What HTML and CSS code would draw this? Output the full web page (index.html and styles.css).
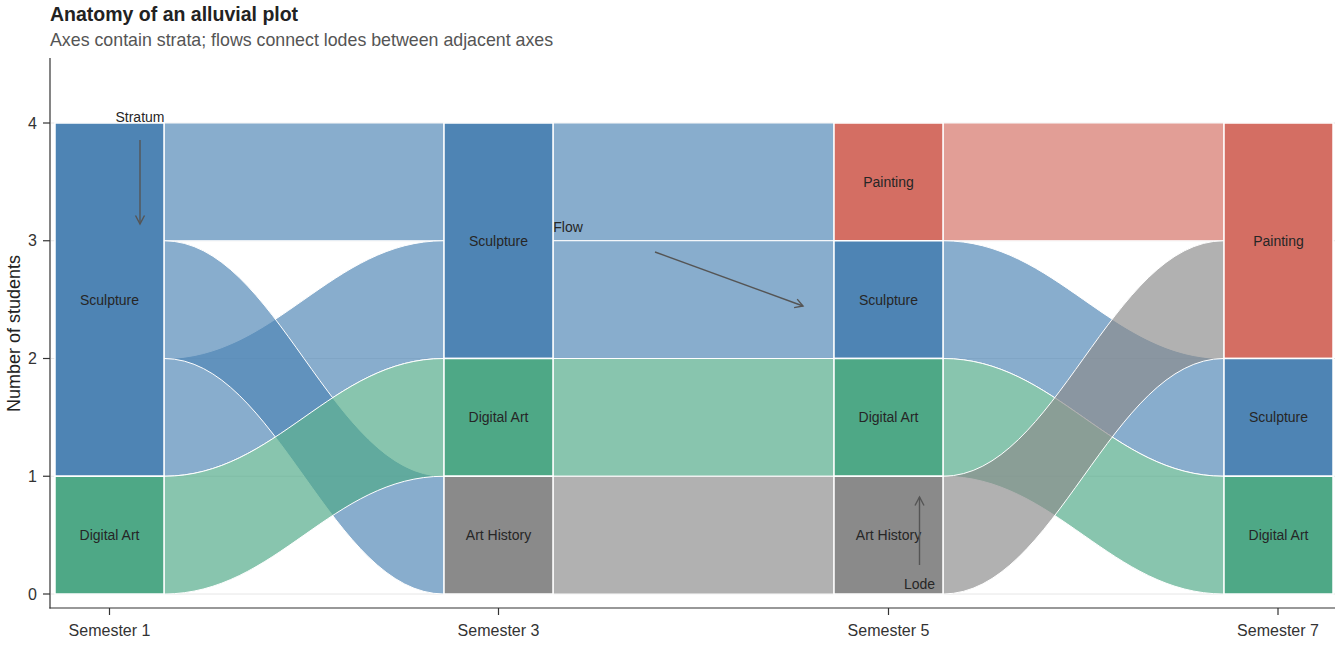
FILE: index.html
```html
<!DOCTYPE html>
<html lang="en">
<head>
<meta charset="utf-8">
<title>Anatomy of an alluvial plot</title>
<link rel="stylesheet" href="styles.css">
</head>
<body>
<div class="figure">
  <header class="head">
    <h1 class="title">Anatomy of an alluvial plot</h1>
    <p class="subtitle">Axes contain strata; flows connect lodes between adjacent axes</p>
  </header>
  <svg class="chart" width="1344" height="598" viewBox="0 52 1344 598" xmlns="http://www.w3.org/2000/svg">
    <!-- gridlines -->
    <g class="grid">
      <line x1="51" y1="594" x2="1335" y2="594"/>
      <line x1="51" y1="476.25" x2="1335" y2="476.25"/>
      <line x1="51" y1="358.5" x2="1335" y2="358.5"/>
      <line x1="51" y1="240.75" x2="1335" y2="240.75"/>
      <line x1="51" y1="123" x2="1335" y2="123"/>
    </g>

    <!-- flows: Semester 1 -> Semester 3 -->
    <g class="flows">
      <rect class="f-sculpture" x="164" y="123" width="280" height="117.75"/>
      <path class="f-sculpture" d="M164 358.5 C276 358.5 332 240.75 444 240.75 L444 358.5 C332 358.5 276 476.25 164 476.25 Z"/>
      <path class="f-sculpture" d="M164 240.75 C276 240.75 332 476.25 444 476.25 L444 594 C332 594 276 358.5 164 358.5 Z"/>
      <path class="f-digital" d="M164 476.25 C276 476.25 332 358.5 444 358.5 L444 476.25 C332 476.25 276 594 164 594 Z"/>

      <!-- Semester 3 -> Semester 5 -->
      <rect class="f-sculpture" x="553" y="123" width="281" height="117.75"/>
      <rect class="f-sculpture" x="553" y="240.75" width="281" height="117.75"/>
      <rect class="f-digital" x="553" y="358.5" width="281" height="117.75"/>
      <rect class="f-history" x="553" y="476.25" width="281" height="117.75"/>

      <!-- Semester 5 -> Semester 7 -->
      <rect class="f-painting" x="943" y="123" width="281" height="117.75"/>
      <path class="f-sculpture" d="M943 240.75 C1055.4 240.75 1111.6 358.5 1224 358.5 L1224 476.25 C1111.6 476.25 1055.4 358.5 943 358.5 Z"/>
      <path class="f-digital" d="M943 358.5 C1055.4 358.5 1111.6 476.25 1224 476.25 L1224 594 C1111.6 594 1055.4 476.25 943 476.25 Z"/>
      <path class="f-history" d="M943 476.25 C1055.4 476.25 1111.6 240.75 1224 240.75 L1224 358.5 C1111.6 358.5 1055.4 594 943 594 Z"/>
    </g>

    <!-- strata -->
    <g class="strata">
      <rect class="s-sculpture" x="55" y="123" width="109" height="353.25"/>
      <rect class="s-digital" x="55" y="476.25" width="109" height="117.75"/>

      <rect class="s-sculpture" x="444" y="123" width="109" height="235.5"/>
      <rect class="s-digital" x="444" y="358.5" width="109" height="117.75"/>
      <rect class="s-history" x="444" y="476.25" width="109" height="117.75"/>

      <rect class="s-painting" x="834" y="123" width="109" height="117.75"/>
      <rect class="s-sculpture" x="834" y="240.75" width="109" height="117.75"/>
      <rect class="s-digital" x="834" y="358.5" width="109" height="117.75"/>
      <rect class="s-history" x="834" y="476.25" width="109" height="117.75"/>

      <rect class="s-painting" x="1224" y="123" width="109" height="235.5"/>
      <rect class="s-sculpture" x="1224" y="358.5" width="109" height="117.75"/>
      <rect class="s-digital" x="1224" y="476.25" width="109" height="117.75"/>
    </g>

    <!-- stratum labels -->
    <g class="slabels">
      <text x="109.5" y="299.6" dy="0.35em">Sculpture</text>
      <text x="109.5" y="535.1" dy="0.35em">Digital Art</text>

      <text x="498.5" y="240.75" dy="0.35em">Sculpture</text>
      <text x="498.5" y="417.4" dy="0.35em">Digital Art</text>
      <text x="498.5" y="535.1" dy="0.35em">Art History</text>

      <text x="888.5" y="181.9" dy="0.35em">Painting</text>
      <text x="888.5" y="299.6" dy="0.35em">Sculpture</text>
      <text x="888.5" y="417.4" dy="0.35em">Digital Art</text>
      <text x="888.5" y="535.1" dy="0.35em">Art History</text>

      <text x="1278.5" y="240.75" dy="0.35em">Painting</text>
      <text x="1278.5" y="417.4" dy="0.35em">Sculpture</text>
      <text x="1278.5" y="535.1" dy="0.35em">Digital Art</text>
    </g>

    <!-- annotations -->
    <g class="notes">
      <text class="note" x="140" y="122">Stratum</text>
      <text class="note" x="568" y="232">Flow</text>
      <text class="note" x="919.5" y="589">Lode</text>
    </g>
    <g class="arrows">
      <line x1="140" y1="140" x2="140" y2="224"/>
      <polyline points="135.5,215.5 140,224 144.5,215.5"/>
      <line x1="655" y1="252" x2="803" y2="306"/>
      <polyline points="797.2,299.1 803,306 794.1,307.6"/>
      <line x1="919.5" y1="565" x2="919.5" y2="497"/>
      <polyline points="915,505.5 919.5,497 924,505.5"/>
    </g>

    <!-- axes -->
    <g class="axis">
      <line x1="50" y1="58" x2="50" y2="608.6"/>
      <line x1="49.4" y1="608" x2="1335" y2="608"/>
      <line x1="43" y1="594" x2="50" y2="594"/>
      <line x1="43" y1="476.25" x2="50" y2="476.25"/>
      <line x1="43" y1="358.5" x2="50" y2="358.5"/>
      <line x1="43" y1="240.75" x2="50" y2="240.75"/>
      <line x1="43" y1="123" x2="50" y2="123"/>
      <line x1="109.5" y1="608" x2="109.5" y2="615"/>
      <line x1="498.5" y1="608" x2="498.5" y2="615"/>
      <line x1="888.5" y1="608" x2="888.5" y2="615"/>
      <line x1="1278" y1="608" x2="1278" y2="615"/>
    </g>
    <g class="yticks">
      <text x="37" y="594" dy="0.35em">0</text>
      <text x="37" y="476.25" dy="0.35em">1</text>
      <text x="37" y="358.5" dy="0.35em">2</text>
      <text x="37" y="240.75" dy="0.35em">3</text>
      <text x="37" y="123" dy="0.35em">4</text>
    </g>
    <g class="xticks">
      <text x="109.5" y="636">Semester 1</text>
      <text x="498.5" y="636">Semester 3</text>
      <text x="888.5" y="636">Semester 5</text>
      <text x="1278" y="636">Semester 7</text>
    </g>
    <text class="ytitle" transform="translate(20 333.5) rotate(-90)">Number of students</text>
  </svg>
</div>
</body>
</html>
```

FILE: styles.css
```css
html, body {
  margin: 0;
  padding: 0;
  background: #ffffff;
}

body {
  font-family: "Liberation Sans", Arial, sans-serif;
  color: #222222;
}

.figure {
  width: 1344px;
  height: 650px;
  overflow: hidden;
  display: flex;
  flex-direction: column;
}

.head {
  padding: 2px 0 0 50px;
  height: 50px;
}

.title {
  margin: 0;
  font-size: 19.5px;
  line-height: 24px;
  font-weight: bold;
  color: #222222;
}

.subtitle {
  margin: 2px 0 0 0;
  font-size: 17.8px;
  line-height: 24px;
  color: #555555;
}

.chart {
  display: block;
  font-family: "Liberation Sans", Arial, sans-serif;
}

.grid line {
  stroke: #e6e6e6;
  stroke-width: 1;
}

.flows rect,
.flows path {
  fill-opacity: 0.67;
  stroke: #ffffff;
  stroke-width: 1;
}

.f-sculpture { fill: #4e84b4; }
.f-digital { fill: #4ea886; }
.f-history { fill: #8a8a8a; }
.f-painting { fill: #d46e63; }

.strata rect {
  stroke: #ffffff;
  stroke-width: 1.5;
}

.s-sculpture { fill: #4e84b4; }
.s-digital { fill: #4ea886; }
.s-history { fill: #8a8a8a; }
.s-painting { fill: #d46e63; }

.slabels text {
  font-size: 14px;
  fill: #262626;
  text-anchor: middle;
}

.note {
  font-size: 14px;
  fill: #262626;
  text-anchor: middle;
}

.arrows line,
.arrows polyline {
  stroke: #555555;
  stroke-width: 1.4;
  fill: none;
}

.axis line {
  stroke: #333333;
  stroke-width: 1.2;
}

.yticks text {
  font-size: 16px;
  fill: #333333;
  text-anchor: end;
}

.xticks text {
  font-size: 16px;
  fill: #333333;
  text-anchor: middle;
}

.ytitle {
  font-size: 18px;
  fill: #222222;
  text-anchor: middle;
}
```
